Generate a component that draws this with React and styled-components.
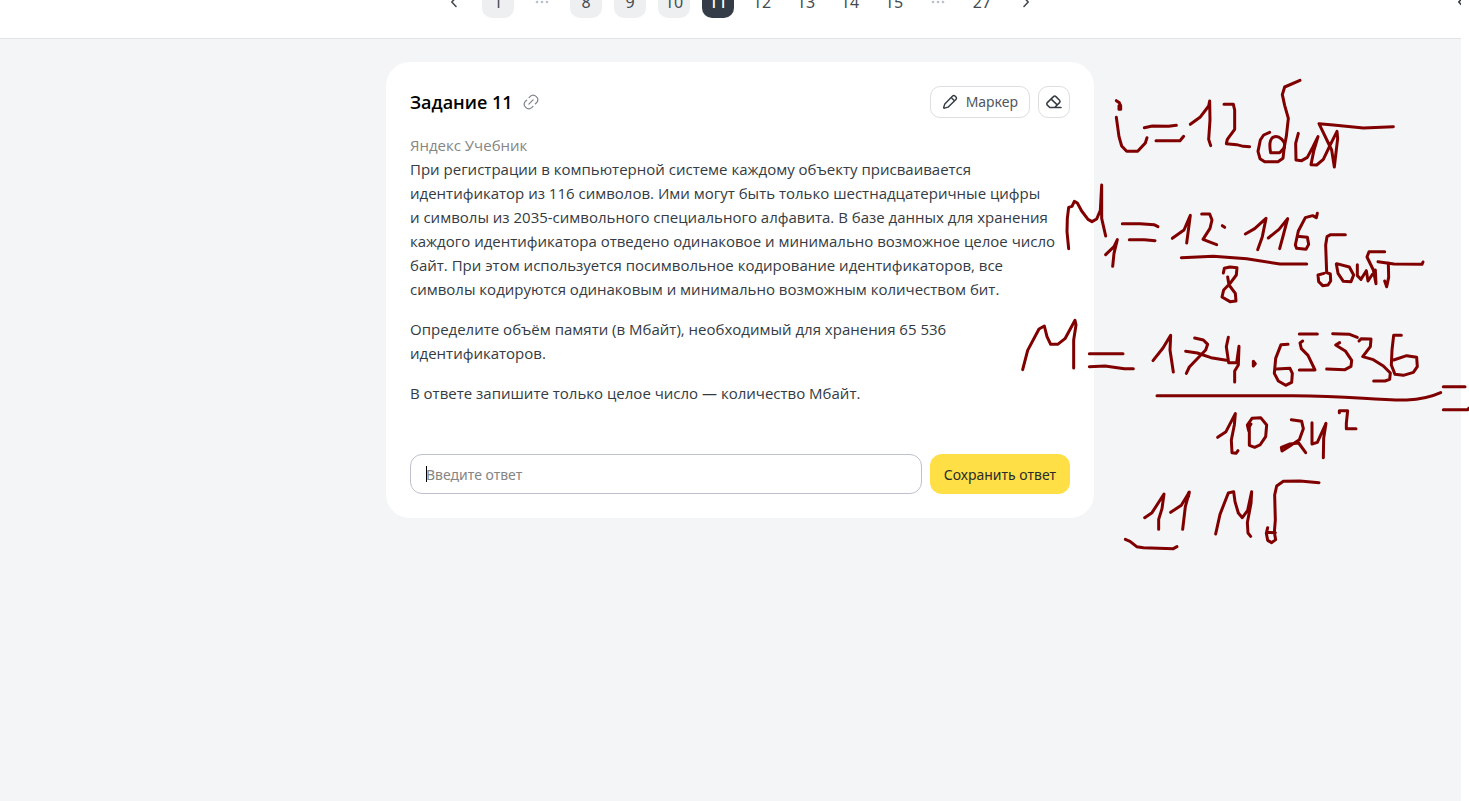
import React from "react";
import styled, { createGlobalStyle } from "styled-components";

const GlobalStyle = createGlobalStyle`
  *, *::before, *::after { box-sizing: border-box; }
  body {
    margin: 0;
    background: #fff;
    font-family: "Noto Sans", "Open Sans", sans-serif;
    color: #343b43;
  }
  button, input { font: inherit; color: inherit; }
`;

const Screen = styled.div`
  position: relative;
  min-height: 100vh;
  padding-right: 8px;
  overflow: hidden;
  display: flex;
`;

const Page = styled.div`
  flex: 1;
  min-width: 0;
  display: flex;
  flex-direction: column;
  background: #f3f5f7;
  overflow: hidden;
`;

const Header = styled.header`
  position: relative;
  display: flex;
  justify-content: center;
  align-items: flex-end;
  height: 39px;
  padding: 0 0 20px 19px;
  background: #fff;
  border-bottom: 1px solid #e1e3e6;
  overflow: hidden;
`;

const Pager = styled.nav`
  display: flex;
  gap: 12px;
`;

const PageButton = styled.button`
  flex: none;
  display: flex;
  align-items: center;
  justify-content: center;
  width: 32px;
  height: 32px;
  padding: 0;
  border: 0;
  border-radius: 10px;
  font-size: 16px;
  line-height: 24px;
  cursor: pointer;
  font-weight: ${(p) => (p.$tone === "current" ? 500 : 400)};
  color: ${(p) => (p.$tone === "current" ? "#fff" : "#444b54")};
  background: ${(p) =>
    p.$tone === "current" ? "#343d47" : p.$tone === "visited" ? "#eeeff1" : "transparent"};
`;

const Gap = styled.span`
  display: flex;
  align-items: center;
  justify-content: center;
  width: 32px;
  height: 32px;
`;

const SideToggle = styled.button`
  position: absolute;
  right: -16px;
  bottom: 20px;
  display: flex;
  align-items: center;
  justify-content: center;
  width: 32px;
  height: 32px;
  padding: 0;
  border: 0;
  background: transparent;
  color: #343b43;
`;

const Main = styled.main`
  display: flex;
  justify-content: center;
  padding: 23px 0 24px 19px;
`;

const Card = styled.section`
  width: 100%;
  max-width: 708px;
  padding: 24px;
  border-radius: 24px;
  background: #fff;
`;

const CardHead = styled.div`
  display: flex;
  align-items: center;
  gap: 8px;
  margin-bottom: 15px;
`;

const Title = styled.h1`
  margin: 0;
  font-family: "Open Sans", "Noto Sans", sans-serif;
  font-size: 18px;
  line-height: 32px;
  font-weight: 600;
  color: #000;
`;

const LinkButton = styled.button`
  display: flex;
  padding: 2px;
  margin-right: auto;
  border: 0;
  background: transparent;
  color: #7d848c;
`;

const ToolButton = styled.button`
  display: flex;
  align-items: center;
  justify-content: center;
  gap: 8px;
  height: 32px;
  min-width: 32px;
  padding: ${(p) => (p.$square ? "0" : "0 11px")};
  border: 1px solid #dddee1;
  border-radius: 10px;
  background: #fff;
  font-size: 14px;
  line-height: 20px;
  color: #4f565e;
  cursor: pointer;

  svg { color: #343b43; }
`;

const Task = styled.div`
  margin-bottom: 49px;
  font-family: "Open Sans", "Noto Sans", sans-serif;
  font-size: 15px;
  line-height: 24px;
`;

const Source = styled.div`
  color: #858585;
`;

const Paragraph = styled.p`
  margin: 0 0 16px;
  white-space: nowrap;

  &:last-child { margin-bottom: 0; }
`;

const AnswerForm = styled.form`
  display: flex;
  gap: 8px;
`;

const AnswerField = styled.div`
  position: relative;
  flex: 1;
  min-width: 0;
  display: flex;
`;

const AnswerInput = styled.input`
  width: 100%;
  height: 40px;
  padding: 0 15px;
  border: 1px solid #bcc1cc;
  border-radius: 12px;
  outline: none;
  background: #fff;
  font-size: 14px;

  &::placeholder { color: #858585; opacity: 1; }
`;

const Caret = styled.span`
  position: absolute;
  left: 16px;
  top: 12px;
  width: 1px;
  height: 16px;
  background: #000;
`;

const SaveButton = styled.button`
  height: 40px;
  padding: 0 14px;
  border: 0;
  border-radius: 12px;
  background: #ffdf46;
  font-size: 14px;
  color: #2b2b2b;
  white-space: nowrap;
  cursor: pointer;
`;

const InkLayer = styled.svg`
  position: absolute;
  inset: 0;
  width: 100%;
  height: 100%;
  pointer-events: none;
  fill: none;
  stroke: #800000;
  stroke-width: 9;
  stroke-linecap: round;
  stroke-linejoin: round;
`;

const Chevron = ({ right }) => (
  <svg width="16" height="16" viewBox="0 0 16 16" fill="none" stroke="currentColor" strokeWidth="1.6" strokeLinecap="round" strokeLinejoin="round">
    <path d={right ? "M6 3.5 10.2 8 6 12.5" : "M10 3.5 5.8 8 10 12.5"} />
  </svg>
);

const Dots = () => (
  <Gap>
    <svg width="14" height="4" viewBox="0 0 14 4" fill="#b9c1cc">
      <circle cx="2" cy="2" r="1.3" />
      <circle cx="7" cy="2" r="1.3" />
      <circle cx="12" cy="2" r="1.3" />
    </svg>
  </Gap>
);

const LinkIcon = () => (
  <svg width="16" height="16" viewBox="0 0 16 16" fill="none" stroke="currentColor" strokeWidth="1.2" strokeLinecap="round">
    <path d="M6.1 3.6 7 2.6C9 .8 11.6.9 13.3 2.6S15.3 6.8 13.5 8.8L12.4 9.8M9.9 12.4 9 13.4C7 15.2 4.4 15.1 2.7 13.4S.7 9.2 2.5 7.2L3.6 6.2M5.9 10.1l4.2-4.2" />
  </svg>
);

const MarkerIcon = () => (
  <svg width="16" height="16" viewBox="0 0 16 16" fill="none" stroke="currentColor" strokeWidth="1.4" strokeLinejoin="round">
    <path d="M10.6 2.1a1.7 1.7 0 0 1 2.4 0l.9.9a1.7 1.7 0 0 1 0 2.4L6 13.2 2.4 14.2c-.5.1-.8-.2-.7-.7L2.8 9.9ZM9.2 3.6l3.2 3.2" />
  </svg>
);

const EraserIcon = () => (
  <svg width="16" height="16" viewBox="0 0 16 16" fill="none" stroke="currentColor" strokeWidth="1.5" strokeLinejoin="round" strokeLinecap="round">
    <path d="M3.8 13.5 1.3 11.1a1.7 1.7 0 0 1 0-2.5l6.2-6a1.7 1.7 0 0 1 2.4 0l3.6 3.6a1.7 1.7 0 0 1 0 2.4L8.7 13.5ZM5.2 5.1l6 5.8M8 13.5h7" />
  </svg>
);

const ink = [
  { x: 1100, y: 70, strokes: [
    "M49 92 58 98 61 106", "M57 107H62V118H57Z",
    "M49 142 57 200 65 228 80 244H113L136 219 141 203",
    "M133 173 157 168 206 169 229 166", "M168 212H240L251 199",
    "M271 163 300 142 326 108 329 93 330 150 326 208 332 227",
    "M372 103H400L404 120V178L382 208 379 221 410 224 430 229 449 230",
    "M600 31 554 51 547 74 554 106 565 145 559 199 553 230 549 265 534 275H494L480 266 474 244 481 210 491 195 509 187",
    "M552 233C560 215 536 193 519 202 509 209 508 228 512 248H539L553 233",
    "M595 190 587 220 588 270 605 272 622 262 638 232 654 200 641 244 633 284 650 285 670 268 690 226 711 184 713 205 703 291 695 240 657 161 700 165 790 174 880 170" ] },
  { x: 1050, y: 175, strokes: [
    "M56 221 51 170 52 130 56 97 66 94 73 79 82 84 95 108 114 133 126 140 140 132 151 106 155 30 155 130 167 183",
    "M217 146H270L312 149 324 155", "M238 194H283L315 197",
    "M167 239 192 215 202 194 192 235 188 274",
    "M367 190 402 165 421 121 410 204",
    "M455 117H479L486 135 480 160 459 193 484 203 500 209",
    "M517 152 524 157", "M394 248 490 244 590 251 690 267H770",
    "M520 294 523 280 540 276 561 278 559 300 542 323 521 345 516 366 540 380 558 378 556 355 537 330 533 306" ] },
  { x: 1230, y: 195, strokes: [
    "M46 117 74 101 108 70 97 125 83 164", "M115 129 147 103 173 71 160 120 149 161",
    "M262 55 259 68 248 62 226 68 205 108 196 150 200 160 228 163 236 148 232 127 202 124",
    "M346 119H302L291 125 287 150 290 233 301 237 302 258 294 270 278 272 266 260 264 240 282 235",
    "M319 207 324 235 340 259 363 260 371 240 358 216 320 206",
    "M382 209V242L393 253 409 227 414 258 436 225 438 266 430 225 411 186 417 170H464",
    "M444 200 492 207 576 208 579 201", "M475 205 476 247 470 275 464 258" ] },
  { x: 1010, y: 310, strokes: [
    "M38 179 53 121 87 57 103 48 111 80 122 103H143L165 86 195 31 198 45 191 90V174",
    "M238 131H339", "M238 170 285 168 343 176H370",
    "M429 152 459 114 482 76 480 120 490 186",
    "M554 84 580 90 593 103 587 120 538 171 529 190", "M527 124 562 129 603 143 649 151",
    "M655 82 649 110 656 158 680 158 687 109 685 165 674 183V216",
    "M441 257H850C1030 257 1080 271 1190 270 1240 268 1270 258 1292 248",
    "M623 382 648 365 676 311 673 345 664 390 666 428 678 430 684 422" ] },
  { x: 1240, y: 310, strokes: [
    "M40 154 46 161 40 168Z",
    "M144 103 123 104 107 145 103 190 115 213 137 226 155 217 157 190 150 175 110 177",
    "M178 72H232", "M188 93 180 99 184 116 204 136 225 180H178",
    "M278 71 329 73 352 82", "M299 98 287 105 317 124 335 151 333 169 315 179 260 177",
    "M357 93 364 86 393 87 391 110 368 140 400 149 430 168 451 189 449 208 435 213H401",
    "M484 76H461L456 120 454 165 465 193 490 196 520 187 532 170 530 142 500 137 461 150",
    "M610 230H675", "M610 299H684L686 295",
    "M26 362 22 345 36 325 62 323 80 345 77 380 60 405 44 412 28 406V350L33 342",
    "M154 329 185 334 190 356 178 389 145 411 126 423 124 412 150 402 176 399 197 428",
    "M216 338 216 402 232 397 258 340 251 385 250 443", "M298 308V302H323L319 340V356H348" ] },
  { x: 1110, y: 470, strokes: [
    "M104 143 126 128 162 72 156 116 146 148V178", "M182 127 214 106 238 66 226 110 218 178", "M236 68V78",
    "M317 192 330 133 355 69 371 65 375 95 385 129 397 143 413 121 425 65 423 100 412 158 414 189 422 199",
    "M627 38 570 33 520 34 500 48 494 75 496 150 493 187 497 209 485 218 473 211 469 190 473 173M473 187 496 188",
    "M46 208 60 214 80 230 100 233 190 236 201 230" ] },
];

const lines = [
  [
    "При регистрации в компьютерной системе каждому объекту присваивается",
    "идентификатор из 116 символов. Ими могут быть только шестнадцатеричные цифры",
    "и символы из 2035-символьного специального алфавита. В базе данных для хранения",
    "каждого идентификатора отведено одинаковое и минимально возможное целое число",
    "байт. При этом используется посимвольное кодирование идентификаторов, все",
    "символы кодируются одинаковым и минимально возможным количеством бит.",
  ],
  ["Определите объём памяти (в Мбайт), необходимый для хранения 65 536", "идентификаторов."],
  ["В ответе запишите только целое число — количество Мбайт."],
];

const pages = [1, null, 8, 9, 10, 11, 12, 13, 14, 15, null, 27];
const tone = (n) => (n === 11 ? "current" : n < 11 ? "visited" : "plain");

export default function App() {
  return (
    <Screen>
      <GlobalStyle />
      <Page>
        <Header>
          <Pager aria-label="Задания">
            <PageButton aria-label="Назад"><Chevron /></PageButton>
            {pages.map((n, i) =>
              n ? <PageButton key={i} $tone={tone(n)}>{n}</PageButton> : <Dots key={i} />
            )}
            <PageButton aria-label="Вперёд"><Chevron right /></PageButton>
          </Pager>
          <SideToggle aria-label="Открыть панель"><Chevron /></SideToggle>
        </Header>
        <Main>
          <Card>
            <CardHead>
              <Title>Задание 11</Title>
              <LinkButton aria-label="Скопировать ссылку"><LinkIcon /></LinkButton>
              <ToolButton><MarkerIcon />Маркер</ToolButton>
              <ToolButton $square aria-label="Ластик"><EraserIcon /></ToolButton>
            </CardHead>
            <Task>
              <Source>Яндекс Учебник</Source>
              {lines.map((group, i) => (
                <Paragraph key={i}>
                  {group.map((line, j) => (
                    <React.Fragment key={j}>{j > 0 && <br />}{line}</React.Fragment>
                  ))}
                </Paragraph>
              ))}
            </Task>
            <AnswerForm onSubmit={(e) => e.preventDefault()}>
              <AnswerField>
                <AnswerInput aria-label="Ответ" placeholder="Введите ответ" />
                <Caret />
              </AnswerField>
              <SaveButton type="submit">Сохранить ответ</SaveButton>
            </AnswerForm>
          </Card>
        </Main>
      </Page>
      <InkLayer aria-hidden="true">
        {ink.map((g, i) => (
          <g key={i} transform={`translate(${g.x} ${g.y}) scale(0.33333)`}>
            {g.strokes.map((d, j) => <path key={j} d={d} />)}
          </g>
        ))}
      </InkLayer>
    </Screen>
  );
}
